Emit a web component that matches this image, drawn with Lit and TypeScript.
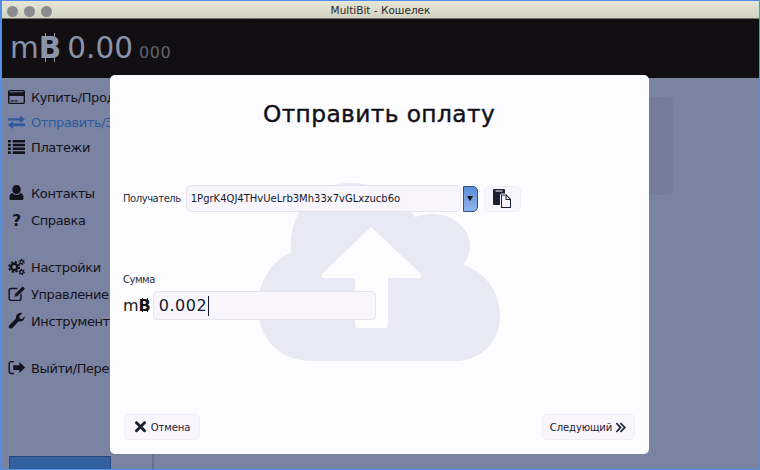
import { LitElement, html, css, svg } from 'lit';
import { customElement } from 'lit/decorators.js';

const icons: Record<string, unknown> = {
  card: svg`<path fill-rule="evenodd" d="M2 2h14a2 2 0 0 1 2 2v11a2 2 0 0 1-2 2H2a2 2 0 0 1-2-2V4a2 2 0 0 1 2-2zM1.500 4v.500h15V4a.5.5 0 0 0-.5-.5H2a.5.5 0 0 0-.5.5zm0 4.500V15a.5.5 0 0 0 .5.5h14a.5.5 0 0 0 .5-.5V8.500zM3 13h3v1.200H3zm4 0h3v1.200H7z"/>`,
  exchange: svg`<path d="M0 5.500h12.500V2.500L18 6.700l-5.500 4.200V8H0zM18 11H5.500V8.500L0 12.700l5.500 4.200v-3H18z"/>`,
  list: svg`<path d="M0 2h3v2.800H0zM5 2h13v2.800H5zM0 6h3v2.800H0zM5 6h13v2.800H5zM0 10h3v2.800H0zM5 10h13v2.800H5zM0 14h3v2.800H0zM5 14h13v2.800H5z"/>`,
  user: svg`<path d="M9 1a4.500 4.500 0 0 1 4.500 4.800A4.500 4.500 0 0 1 9 10.500a4.500 4.500 0 0 1-4.500-4.700A4.500 4.500 0 0 1 9 1zM5 9.500C6 11 7.500 11.600 9 11.600s3-.6 4-2.100c2.500.2 3.500 2.500 3.500 5.500 0 1.400-1 2-2 2h-11c-1 0-2-.6-2-2 0-3 1-5.300 3.500-5.500z"/>`,
  gears: svg`<g fill="none" stroke="currentColor"><circle cx="6.500" cy="9.500" r="3.300" stroke-width="2.400"/><circle cx="6.500" cy="9.500" r="5.300" stroke-width="2" stroke-dasharray="2.400 1.770"/><circle cx="14.500" cy="4.200" r="1.700" stroke-width="1.300"/><circle cx="14.500" cy="4.200" r="2.800" stroke-width="1.200" stroke-dasharray="1.400 1.530"/><circle cx="14.500" cy="14.800" r="1.700" stroke-width="1.300"/><circle cx="14.500" cy="14.800" r="2.800" stroke-width="1.200" stroke-dasharray="1.400 1.530"/></g>`,
  edit: svg`<path d="M11.500 15.500H3.500a1.500 1.500 0 0 1-1.500-1.500V6a1.500 1.500 0 0 1 1.500-1.500H10V3H3.500A3 3 0 0 0 .5 6v8a3 3 0 0 0 3 3h8a3 3 0 0 0 3-3V9.500H13V14a1.500 1.500 0 0 1-1.500 1.500z"/><path d="M15.500 1.500l2.500 2.500-8 8-3.500 1 1-3.500zM7.800 10.800l-.5 1.700 1.700-.5z"/>`,
  wrench: svg`<path d="M17.500 4.500c.5 2.500-1.500 5.500-4.500 5.500-.6 0-1.100-.1-1.600-.3L4.500 16.800c-.9.900-2.300.9-3.100.1-.9-.9-.8-2.200 0-3l7-7C8 4.500 9.500 1 13.500.8c.6 0 1.200.1 1.700.3L12 4.300l.5 2.500 2.500.7z"/>`,
  signout: svg`<path d="M6.500 3.500h-3A1.500 1.500 0 0 0 2 5v8a1.500 1.500 0 0 0 1.500 1.500h3V16h-3A3 3 0 0 1 .5 13V5a3 3 0 0 1 3-3h3z"/><path d="M12 3.200L18.200 9 12 14.800v-3.300H5.500v-5H12z"/>`,
  times: svg`<path d="M4.500 1.800L9 6.300l4.500-4.500a1.500 1.500 0 0 1 2.100 0l.7.7a1.500 1.500 0 0 1 0 2.100L11.800 9l4.500 4.500a1.500 1.500 0 0 1 0 2.100l-.7.700a1.500 1.500 0 0 1-2.100 0L9 11.800l-4.500 4.500a1.500 1.500 0 0 1-2.100 0l-.7-.7a1.500 1.500 0 0 1 0-2.100L6.200 9 1.700 4.600a1.500 1.500 0 0 1 0-2.100l.7-.7a1.500 1.500 0 0 1 2.100 0z"/>`,
  chevrons: svg`<path d="M3 2l7 7.500-7 7.500-1.700-1.700L6.500 9.500 1.300 3.700zM9 2l7.500 7.500L9 17l-1.700-1.700 5.700-5.800-5.700-5.800z"/>`,
  paste: svg`<path d="M1 0h10a1 1 0 0 1 1 1v3.500H8.500A1.500 1.500 0 0 0 7 6v10H1a1 1 0 0 1-1-1V1a1 1 0 0 1 1-1z"/><path fill-rule="evenodd" d="M8 5.500h5.500L18 10v9H8zm1 1v11.500h8v-7h-4.500V6.500zm4.500.5v3h3z"/><path d="M2.500 1.500h7v1h-7z" fill="#fdfcfe"/>`,
};

const icon = (name: string) => html`<svg class="ic" viewBox="0 0 18 19">${icons[name]}</svg>`;

const navGroups = [
  [
    { icon: 'card', label: 'Купить/Продать' },
    { icon: 'exchange', label: 'Отправить/Запросить', active: true },
    { icon: 'list', label: 'Платежи' },
  ],
  [
    { icon: 'user', label: 'Контакты' },
    { icon: '', label: 'Справка' },
  ],
  [
    { icon: 'gears', label: 'Настройки' },
    { icon: 'edit', label: 'Управление' },
    { icon: 'wrench', label: 'Инструменты' },
  ],
  [{ icon: 'signout', label: 'Выйти/Перейти' }],
];

@customElement('app-root')
export class AppRoot extends LitElement {
  static styles = css`
    :host {
      display: block;
      width: 760px;
      height: 470px;
      font-family: 'DejaVu Sans', sans-serif;
      color: #111018;
    }
    * {
      box-sizing: border-box;
    }
    .window {
      position: relative;
      width: 760px;
      height: 470px;
      overflow: hidden;
      display: flex;
      flex-direction: column;
      background: #7b83a2;
      border: 1px solid #4f8fe6;
      border-left-width: 2px;
    }
    .titlebar {
      flex: none;
      height: 18px;
      padding-top: 1px;
      display: flex;
      align-items: center;
      position: relative;
      background: linear-gradient(#e6e6d8, #d3d3c2);
      border-bottom: 1px solid #74746a;
      font-size: 10.500px;
      color: #2b2b28;
      justify-content: center;
    }
    .lights {
      position: absolute;
      left: 5px;
      top: 5px;
      display: flex;
      gap: 6px;
    }
    .lights i {
      width: 11px;
      height: 11px;
      border-radius: 50%;
      background: #8b8b8f;
    }
    .balance {
      flex: none;
      height: 59px;
      background: #120f12;
      display: flex;
      align-items: baseline;
      padding: 9px 0 0 8px;
      color: #8a93aa;
      font-size: 29.500px;
      line-height: 40px;
    }
    .btc {
      position: relative;
      display: inline-block;
      font-weight: bold;
    }
    .btc::before,
    .btc::after {
      content: '';
      position: absolute;
      left: 28%;
      width: 34%;
      height: 12%;
      top: 13%;
      border-left: 1.500px solid currentColor;
      border-right: 1.500px solid currentColor;
    }
    .btc::after {
      top: auto;
      bottom: 15%;
    }
    .whole {
      margin-left: 6px;
    }
    .small {
      margin-left: 6px;
      font-size: 16px;
      color: #60646f;
      letter-spacing: 0.6px;
    }
    .body {
      flex: 1;
      display: flex;
      min-height: 0;
    }
    .side {
      flex: none;
      width: 152px;
      padding-top: 9px;
      display: flex;
      flex-direction: column;
      gap: 27px;
      position: relative;
      border-right: 2px solid #6a7189;
    }
    .group {
      display: flex;
      flex-direction: column;
      gap: 7px;
    }
    .group:first-child {
      gap: 5px;
      margin-bottom: -1px;
    }
    .item {
      height: 20px;
      display: flex;
      align-items: center;
      gap: 6px;
      padding-left: 6px;
      font-size: 13px;
      letter-spacing: -0.4px;
      white-space: nowrap;
      color: #13131c;
    }
    .item.active {
      color: #2f5b9c;
    }
    .ic {
      flex: none;
      width: 17px;
      height: 18px;
      fill: currentColor;
    }
    .q {
      flex: none;
      width: 17px;
      font-weight: bold;
      font-size: 16px;
      text-align: center;
    }
    .side-foot {
      position: absolute;
      left: 7px;
      top: 378px;
      width: 102px;
      height: 20px;
      background: #33609e;
      border: 1px solid #264a80;
    }
    .content {
      flex: 1;
      padding: 19px 86px 0 0;
    }
    .panel {
      height: 98px;
      border: 1px solid #757c98;
      border-radius: 4px;
      background: #767d9a;
    }
    .modal {
      position: absolute;
      left: 108px;
      top: 74px;
      width: 539px;
      height: 379px;
      background: #fdfcfe;
      border-radius: 5px;
      display: flex;
      flex-direction: column;
      padding: 22px 14px 14px 13px;
      overflow: hidden;
    }
    .cloud {
      position: absolute;
      left: 147px;
      top: 107px;
      width: 244px;
      height: 179px;
    }
    .modal > *:not(.cloud) {
      position: relative;
    }
    h1 {
      margin: 0;
      text-align: center;
      font-size: 23.300px;
      font-weight: normal;
      line-height: 34px;
      letter-spacing: 0.4px;
      -webkit-text-stroke: 0.4px #111018;
    }
    .recipient {
      margin-top: 54px;
      display: flex;
      align-items: center;
      height: 27px;
    }
    .label {
      font-size: 10px;
      letter-spacing: -0.45px;
      color: #2a2e42;
    }
    .combo {
      margin-left: 5px;
      width: 275px;
      height: 27px;
      display: flex;
      align-items: center;
      padding-left: 4px;
      background: #f8f6fc;
      border: 1.500px solid #e4e2f3;
      border-radius: 5px;
      font-size: 10px;
      color: #14182c;
    }
    .arrow {
      width: 15px;
      height: 26px;
      margin-left: 2px;
      background: linear-gradient(#5d8ed8, #8fb4ea);
      border: 1px solid #2f4f86;
      border-radius: 0 5px 5px 0;
      display: flex;
      align-items: center;
      justify-content: center;
    }
    .arrow::after {
      content: '';
      border: 3.500px solid transparent;
      border-top: 5px solid #111;
      border-bottom: 0;
    }
    .btn {
      display: flex;
      align-items: center;
      justify-content: center;
      height: 26px;
      background: #f8f6fc;
      border: 1px solid #efedf7;
      border-radius: 5px;
      font-size: 10px;
      letter-spacing: -0.1px;
      color: #1c2033;
    }
    .paste {
      width: 37px;
      margin-left: 6px;
    }
    .paste .ic {
      width: 18px;
      height: 19px;
    }
    .amount-label {
      margin-top: 61px;
      line-height: 14px;
    }
    .amount {
      margin-top: 4px;
      display: flex;
      align-items: center;
      gap: 2px;
    }
    .unit {
      font-size: 16px;
      color: #14141a;
    }
    .field {
      width: 223px;
      height: 29px;
      display: flex;
      align-items: center;
      padding-left: 5px;
      background: #f8f6fc;
      border: 1.500px solid #e4e2f3;
      border-radius: 5px;
      font-size: 16px;
      letter-spacing: 0.5px;
      color: #14182c;
    }
    .caret {
      width: 1px;
      height: 20px;
      margin-left: 1px;
      background: #14182c;
    }
    .actions {
      margin-top: auto;
      display: flex;
      justify-content: space-between;
      padding-left: 1px;
    }
    .cancel {
      width: 76px;
      gap: 4px;
    }
    .next {
      width: 93px;
      gap: 3px;
    }
    .cancel .ic {
      width: 13px;
      height: 14px;
    }
    .next .ic {
      width: 12px;
      height: 13px;
    }
  `;

  render() {
    return html`
      <div class="window">
        <div class="titlebar">
          <div class="lights"><i></i><i></i><i></i></div>
          MultiBit - Кошелек
        </div>
        <div class="balance">
          <span>m<span class="btc">B</span></span>
          <span class="whole">0.00</span>
          <span class="small">000</span>
        </div>
        <div class="body">
          <div class="side">
            ${navGroups.map(
              (group) => html`
                <div class="group">
                  ${group.map(
                    (it) => html`
                      <div class="item ${it.active ? 'active' : ''}">
                        ${it.icon ? icon(it.icon) : html`<span class="q">?</span>`}
                        <span>${it.label}</span>
                      </div>
                    `
                  )}
                </div>
              `
            )}
            <div class="side-foot"></div>
          </div>
          <div class="content"><div class="panel"></div></div>
        </div>
        <div class="modal">
          <svg class="cloud" viewBox="257 181 244 179">
            <path
              fill="#e9e9f6"
              d="M312 360C280 360 258 338 258 306C258 280 272 260 291 251C288 212 314 182 350 182C378 182 400 195 415 216C422 214 428 213 432 213C454 213 470 228 470 245C470 252 467 259 463 264C484 270 500 290 500 315C500 342 480 360 455 360Z"
            ></path>
            <path
              fill="#fdfcfe"
              d="M371 226L420 272Q424 277 418 277L388 277L388 324Q388 327 385 327L358 327Q355 327 355 324L355 277L325 277Q319 277 323 272Z"
            ></path>
          </svg>
          <h1>Отправить оплату</h1>
          <div class="recipient">
            <span class="label">Получатель</span>
            <div class="combo">1PgrK4QJ4THvUeLrb3Mh33x7vGLxzucb6o</div>
            <div class="arrow"></div>
            <div class="btn paste">${icon('paste')}</div>
          </div>
          <div class="label amount-label">Сумма</div>
          <div class="amount">
            <span class="unit">m<span class="btc">B</span></span>
            <div class="field">0.002<span class="caret"></span></div>
          </div>
          <div class="actions">
            <div class="btn cancel">${icon('times')}Отмена</div>
            <div class="btn next">Следующий${icon('chevrons')}</div>
          </div>
        </div>
      </div>
    `;
  }
}
